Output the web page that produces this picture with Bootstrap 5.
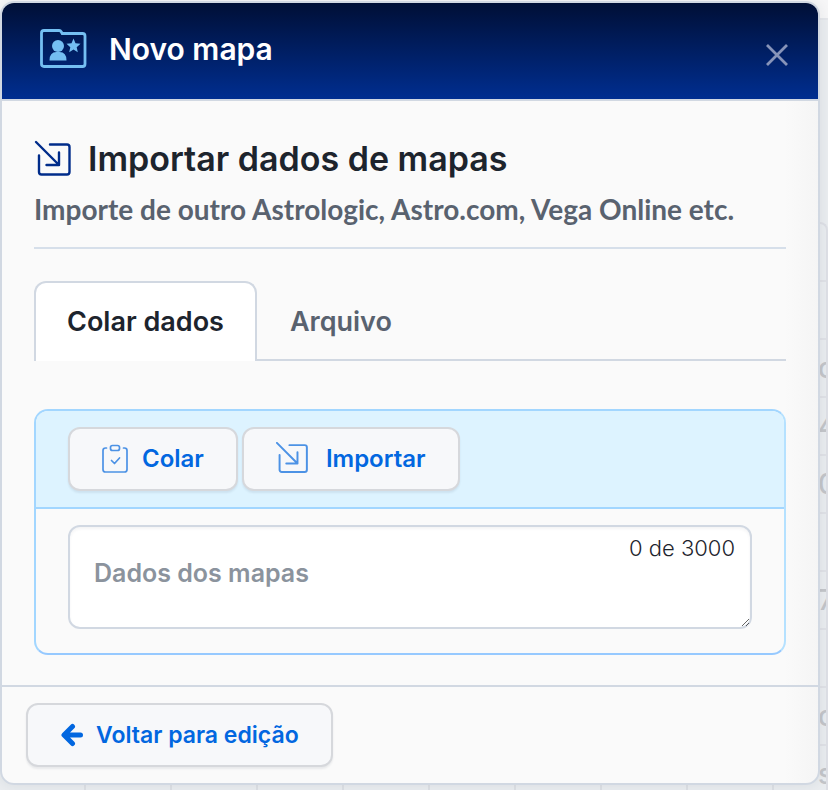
<!DOCTYPE html>
<html lang="pt-BR">
<head>
<meta charset="utf-8">
<meta name="viewport" content="width=device-width, initial-scale=1">
<title>Novo mapa</title>
<link href="https://cdn.jsdelivr.net/npm/bootstrap@5.3.0/dist/css/bootstrap.min.css" rel="stylesheet">
<style>
  :root { --line: #d1d8e2; --blue: #0267e0; --sky: #a2d6ff; }
  body { background: #e9ecef; font-family: Inter, "Liberation Sans", sans-serif; color: #1d242d; min-height: 100vh; overflow: hidden; }
  .behind { inset: 0; z-index: 0; color: #c3c5c9; font-size: 28px; font-weight: 500; line-height: 32px; }
  .behind-top { height: 20px; background: #f6f6f7; border-bottom: 2px solid #e4e6ea; }
  .behind-list { width: 10px; top: 222px; right: 0; border-top: 2px solid #dddfe5; border-right: 2px solid #dddfe5; border-top-right-radius: 8px; }
  .behind-list div { height: 58px; padding: 12px 0; border-bottom: 2px solid #dfe1e6; }
  .behind-foot { height: 6px; }
  .behind-foot span { flex: 0 0 86px; border-right: 2px solid #dcdfe4; }
  .map-dialog { z-index: 1; margin: 1px 8px 5px 0; border: 2px solid var(--line); border-radius: 14px; background: linear-gradient(to left, #f5f5f5, #fafafa 34px); width: auto; overflow: hidden; box-shadow: 0 0 12px rgba(40,50,70,.08); }
  .map-dialog .modal-header { height: 98px; padding: 0 29px 4px 38px; border-bottom: 2px solid var(--line); border-radius: 0; background: linear-gradient(#000f36, #002e90); }
  .title-row { gap: 22px; }
  .map-dialog .modal-title { font-size: 30px; line-height: 40px; font-weight: 600; color: #fff; }
  .close-x { color: #8794b9; padding: 0; border: 0; background: none; line-height: 0; margin-top: 12px; }
  .map-dialog .modal-body { padding: 36px 32px 30px; }
  .section-title { font-size: 34px; line-height: 44px; font-weight: 600; }
  .section-note { font-family: Lato, sans-serif; font-weight: 700; font-size: 28px; line-height: 36px; color: #59626f; margin-top: 10px; padding-bottom: 20px; border-bottom: 2px solid #d6dfea; }
  .map-tabs { margin: 32px 0 48px; border-bottom: 2px solid var(--line); }
  .map-tabs .nav-link { height: 80px; margin-bottom: -2px; padding: 0 31px; border-width: 2px; border-bottom: 0; border-radius: 12px 12px 0 0; font-size: 27px; font-weight: 600; color: #59626f; }
  .map-tabs .nav-link.active { color: #1d242d; background: #fff; border-color: var(--line); }
  .paste-panel { border: 2px solid var(--sky); border-right-color: #b5e1ff; border-bottom-color: #96c9ff; border-radius: 14px; background: #fafafa; overflow: hidden; }
  .paste-tools { background: #ddf3ff; border-bottom: 2px solid var(--sky); padding: 16px 32px; gap: 4px; }
  .btn-soft { --bs-btn-color: var(--blue); --bs-btn-bg: #f7f8fa; --bs-btn-border-color: #d6d8dc; --bs-btn-hover-color: var(--blue); --bs-btn-hover-bg: #fff; --bs-btn-hover-border-color: #c8ccd2; border-width: 2px; border-radius: 12px; height: 64px; padding: 0 32px; font-size: 24px; font-weight: 600; box-shadow: 0 2px 2px rgba(30,40,60,.08); }
  .paste-body { padding: 16px 32px 24px; }
  .paste-body textarea { height: 104px; padding: 26px 24px; border: 2px solid var(--line); border-radius: 12px; font-size: 25px; line-height: 40px; font-weight: 600; background: #fff; overflow: hidden; box-shadow: inset 0 2px 3px rgba(30,40,60,.05); }
  .paste-body textarea::placeholder { color: #8b939d; }
  .char-count { top: 27px; right: 49px; font-size: 22px; line-height: 24px; font-weight: 300; }
  .map-dialog .modal-footer { padding: 16px 24px; border-top: 2px solid var(--line); }
  .map-dialog .modal-footer .btn-soft { padding: 0 32px; font-size: 23px; }
</style>
<script src="https://cdn.jsdelivr.net/npm/bootstrap@5.3.0/dist/js/bootstrap.bundle.min.js"></script>
</head>
<body class="position-relative d-flex flex-column">
<div class="behind position-absolute overflow-hidden d-flex flex-column justify-content-between" aria-hidden="true">
  <div class="behind-top"></div>
  <div class="behind-list position-absolute overflow-hidden">
    <div></div><div></div><div>o</div><div>4</div><div>0</div><div></div><div>7</div><div></div><div>o</div><div>s</div>
  </div>
  <div class="behind-foot d-flex overflow-hidden"><span></span><span></span><span></span><span></span><span></span><span></span><span></span><span></span><span></span></div>
</div>
<main class="modal-content map-dialog" role="dialog" aria-labelledby="dialog-title">
  <header class="modal-header d-flex align-items-center justify-content-between">
    <div class="title-row d-flex align-items-center">
      <svg width="47" height="42" viewBox="0 1 47 42" fill="#74bff2" aria-hidden="true">
        <path d="M4 3.500h15.200q1.300 0 2 1.200l1 1.800h20.300q2.500 0 2.500 2.500v28q0 2.500-2.500 2.500H4q-2.500 0-2.500-2.500V6Q1.500 3.500 4 3.500z" fill="none" stroke="#74bff2" stroke-width="2.800"/>
        <circle cx="18" cy="19" r="6"/><path d="M9.500 33.500q0-8.500 7-8.500h3q7 0 7 8.500z"/>
        <path d="M33.500 11.500l2 4.800 5 .5-3.800 3.400 1.100 5-4.300-2.600-4.300 2.600 1.100-5-3.800-3.400 5-.5z"/>
      </svg>
      <h1 class="modal-title" id="dialog-title">Novo mapa</h1>
    </div>
    <button type="button" class="close-x" aria-label="Fechar"><svg width="24" height="24" viewBox="0 0 24 24" fill="none" stroke="currentColor" stroke-width="2.800"><path d="M2 2l20 20M22 2L2 22"/></svg></button>
  </header>
  <div class="modal-body">
    <div class="d-flex align-items-center gap-3">
      <svg width="38" height="38" viewBox="0 0 38 38" fill="none" stroke="#002c8a" stroke-width="2.400" stroke-linecap="round" stroke-linejoin="round" aria-hidden="true"><path d="M2 2l23 23M25 12.500v12.500H12.500M16 4.500h17q2.500 0 2.500 2.500v25q0 2.500-2.500 2.500H7.500Q5 34.500 5 32V15.500"/></svg>
      <h2 class="section-title mb-0">Importar dados de mapas</h2>
    </div>
    <p class="section-note mb-0">Importe de outro Astrologic, Astro.com, Vega Online etc.</p>
    <ul class="nav nav-tabs map-tabs" role="tablist">
      <li class="nav-item" role="presentation"><button type="button" class="nav-link active" role="tab" aria-selected="true">Colar dados</button></li>
      <li class="nav-item" role="presentation"><button type="button" class="nav-link" role="tab" aria-selected="false">Arquivo</button></li>
    </ul>
    <section class="paste-panel">
      <div class="paste-tools d-flex">
        <button type="button" class="btn btn-soft d-flex align-items-center gap-2">
          <svg width="28" height="30" viewBox="1 0 28 30" fill="none" stroke="#4c92e5" stroke-width="1.700" stroke-linecap="round" stroke-linejoin="round" aria-hidden="true"><path d="M5.500 4H4.500Q2 4 2 6.500v19Q2 28 4.500 28h19q2.500 0 2.500-2.500v-19Q26 4 23.500 4h-1M10.500 16.500l3 3 5-5.500"/><rect x="9.500" y="1.500" width="9" height="5" rx="2"/></svg>
          <span class="ms-1">Colar</span>
        </button>
        <button type="button" class="btn btn-soft d-flex align-items-center gap-3">
          <svg width="34" height="34" viewBox="1 1 38 38" fill="none" stroke="#4c92e5" stroke-width="2.200" stroke-linecap="round" stroke-linejoin="round" aria-hidden="true"><path d="M2 2l23 23M25 12.500v12.500H12.500M16 4.500h17q2.500 0 2.500 2.500v25q0 2.500-2.500 2.500H7.500Q5 34.500 5 32V15.500"/></svg>
          <span>Importar</span>
        </button>
      </div>
      <div class="paste-body position-relative">
        <label for="map-data" class="visually-hidden">Dados dos mapas</label>
        <textarea id="map-data" class="form-control" maxlength="3000" placeholder="Dados dos mapas"></textarea>
        <span class="char-count position-absolute">0 de 3000</span>
      </div>
    </section>
  </div>
  <footer class="modal-footer d-flex justify-content-start">
    <button type="button" class="btn btn-soft d-flex align-items-center m-0">
      <svg width="24" height="24" viewBox="0 0 24 24" fill="none" stroke="currentColor" stroke-width="5" stroke-linecap="round" stroke-linejoin="round" aria-hidden="true"><path d="M12.500 3.500L4 12l8.500 8.500M5 12h15.500"/></svg>
      <span class="ms-2 ps-1">Voltar para edição</span>
    </button>
  </footer>
</main>
</body>
</html>
